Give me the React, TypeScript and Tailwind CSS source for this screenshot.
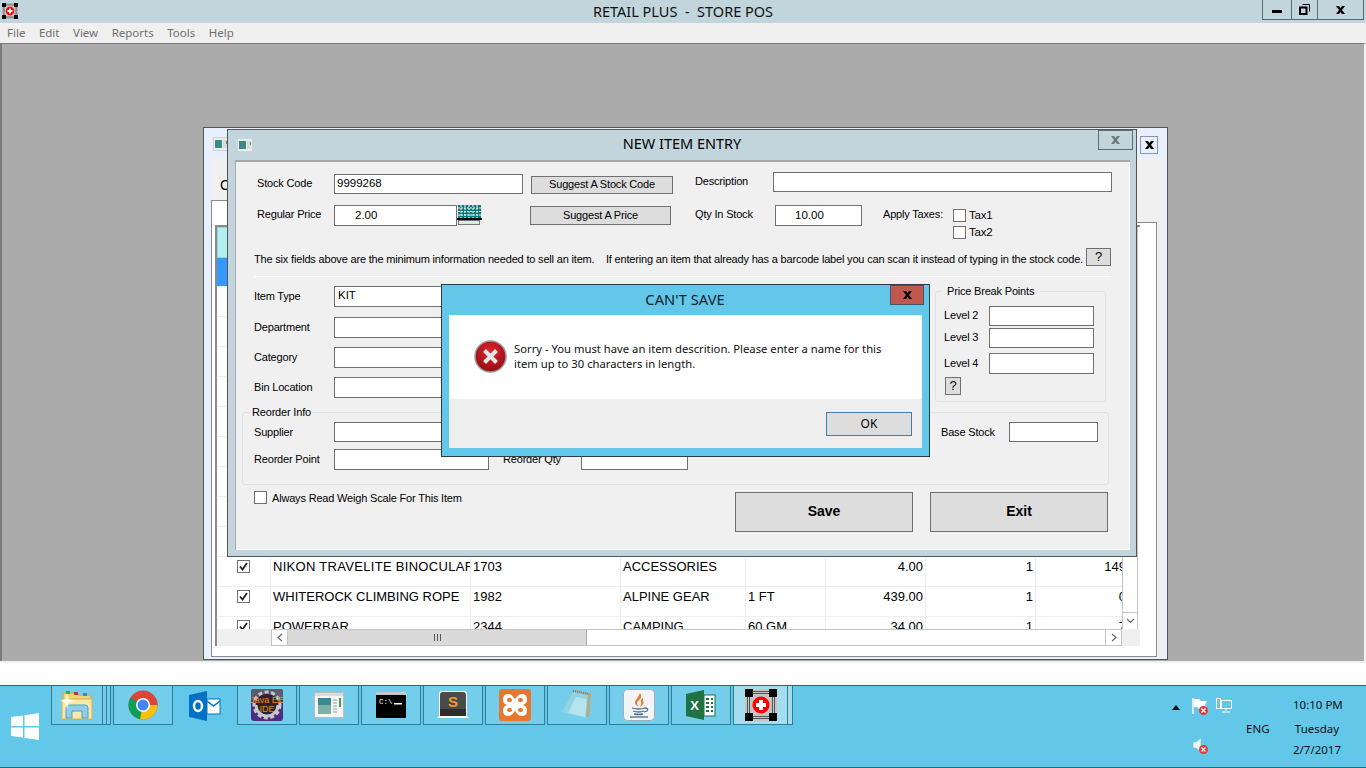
import React from "react";

const ui = "font-['Liberation_Sans',Arial,sans-serif]";
const segoe = "font-['Noto_Sans','Open_Sans',sans-serif]";

function AppGlyph({ size = 16 }: { size?: number }) {
  return (
    <svg width={size} height={size} viewBox="0 0 32 32">
      <rect x="0" y="0" width="32" height="32" fill="#c4c4c4" />
      <path d="M0 0h8v8H0zM24 0h8v8h-8zM0 24h8v8H0zM24 24h8v8h-8z" fill="#000" />
      <g stroke="#555" strokeWidth="1" fill="none">
        <path d="M8 2.5h16M8 4.5h16M8 27.5h16M8 29.5h16M2.5 8v16M4.5 8v16M27.5 8v16M29.5 8v16" />
      </g>
      <circle cx="16" cy="16" r="8.5" fill="#f00" />
      <path d="M14 11h4v3h3v4h-3v3h-4v-3h-3v-4h3z" fill="#fff" />
    </svg>
  );
}

function FormIcon() {
  return (
    <svg width="16" height="14" viewBox="0 0 16 14">
      <rect width="16" height="14" fill="#e8ecec" stroke="#b5bcbc" />
      <rect x="2" y="3" width="7" height="8" fill="#3d8a84" />
      <rect x="10" y="3" width="4" height="8" fill="#d5dcdc" />
      <rect x="13" y="4" width="1" height="3" fill="#5da24e" />
    </svg>
  );
}

function CloseX({ className = "" }: { className?: string }) {
  return (
    <svg width="9" height="8" viewBox="0 0 9 8" className={className}>
      <path d="M0 0h3l1.5 2L6 0h3L6 4l3 4H6L4.5 6 3 8H0l3-4z" fill="currentColor" />
    </svg>
  );
}

function CheckBox({ checked = false }: { checked?: boolean }) {
  return (
    <span className="flex h-[13px] w-[13px] shrink-0 items-center justify-center border border-[#707070] bg-white">
      {checked && (
        <svg width="9" height="9" viewBox="0 0 9 9">
          <path d="M1 4.5 3.5 7.5 8 1" stroke="#222" strokeWidth="1.8" fill="none" />
        </svg>
      )}
    </span>
  );
}

function Input({ width, height = 20, value = "", pad = 3 }: { width: number; height?: number; value?: string; pad?: number }) {
  return (
    <div
      className="flex shrink-0 items-center border border-[#707070] bg-white text-[11.5px] tracking-normal text-black"
      style={{ width, height, paddingLeft: pad }}
    >
      {value}
    </div>
  );
}

function GrayButton({ children, className = "" }: { children: React.ReactNode; className?: string }) {
  return (
    <div className={`flex shrink-0 items-center justify-center border border-[#707070] bg-[#dddddd] text-black ${className}`}>
      {children}
    </div>
  );
}

function Label({ children, width, className = "" }: { children: React.ReactNode; width: number; className?: string }) {
  return (
    <span className={`shrink-0 whitespace-nowrap text-black ${className}`} style={{ width }}>
      {children}
    </span>
  );
}

const columnWidths = [54, 200, 150, 125, 80, 100, 110, 90];

const rows = [
  { name: "", code: "", cat: "", size: "", price: "", qty: "", extra: "", check: false, selected: true, spacing: 0 },
  ...Array.from({ length: 9 }, () => ({ name: "", code: "", cat: "", size: "", price: "", qty: "", extra: "", check: false, selected: false, spacing: 0 })),
  { name: "NIKON TRAVELITE BINOCULARS", code: "1703", cat: "ACCESSORIES", size: "", price: "4.00", qty: "1", extra: "149", check: true, selected: false, spacing: 0.3 },
  { name: "WHITEROCK CLIMBING ROPE", code: "1982", cat: "ALPINE GEAR", size: "1 FT", price: "439.00", qty: "1", extra: "0", check: true, selected: false, spacing: 0 },
  { name: "POWERBAR", code: "2344", cat: "CAMPING", size: "60 GM", price: "34.00", qty: "1", extra: "7", check: true, selected: false, spacing: 0 },
];

function ItemGrid() {
  return (
    <div className="ml-[3px] mt-[24px] flex h-[421px] w-[925px] flex-col border-l-2 border-t-2 border-[#8a8a8a]">
      <div className="flex h-[402px]">
        <div className="w-[905px] overflow-hidden">
          <div className="flex h-[31px]">
            <div className="h-full w-[54px] border border-[#8fd8d8] bg-[#b4efef] pl-[9px] pt-[6px] text-[14px] leading-none text-[#5a1030]">I</div>
          </div>
          {rows.map((row, i) => (
            <div
              key={i}
              className={`flex shrink-0 border-b border-[#eeeeee] text-[13px] text-black ${ui} ${row.selected ? "h-[29px] bg-[#3399ff]" : "h-[30px] bg-white"}`}
            >
              <div className="flex shrink-0 justify-center border-r border-[#eeeeee] pt-[3px]" style={{ width: columnWidths[0] }}>
                {row.check && <CheckBox checked />}
              </div>
              {[row.name, row.code, row.cat, row.size].map((text, j) => (
                <div
                  key={j}
                  className="shrink-0 overflow-hidden whitespace-nowrap border-r border-[#eeeeee] pl-[2px]"
                  style={{ width: columnWidths[j + 1], letterSpacing: j === 0 ? row.spacing : 0 }}
                >
                  {text}
                </div>
              ))}
              {[row.price, row.qty, row.extra].map((text, j) => (
                <div
                  key={j}
                  className={`shrink-0 overflow-hidden whitespace-nowrap text-right ${j === 2 ? "" : "border-r border-[#eeeeee] pr-[2px]"}`}
                  style={{ width: columnWidths[j + 5] }}
                >
                  {text}
                </div>
              ))}
            </div>
          ))}
        </div>
        <div className="flex w-[16px] flex-col justify-end border-x border-t border-[#c4c4c4] bg-white">
          <div className="flex h-[17px] items-center justify-center border-t border-[#c4c4c4]">
            <svg width="9" height="6" viewBox="0 0 9 6"><path d="M1 1l3.5 3.5L8 1" stroke="#666" strokeWidth="1.2" fill="none" /></svg>
          </div>
        </div>
      </div>
      <div className="flex h-[17px] bg-[#f0f0f0]">
        <div className="w-[54px]" />
        <div className="flex w-[851px] border border-[#c4c4c4] bg-white">
          <div className="flex w-[16px] items-center justify-center border-r border-[#c4c4c4]">
            <svg width="6" height="9" viewBox="0 0 6 9"><path d="M5 1L1 4.5 5 8" stroke="#666" strokeWidth="1.2" fill="none" /></svg>
          </div>
          <div className="flex w-[299px] items-center justify-center border-r border-[#a8a8a8] bg-[#dadada]">
            <svg width="7" height="7" viewBox="0 0 7 7"><path d="M.5 0v7M3.5 0v7M6.5 0v7" stroke="#555" /></svg>
          </div>
          <div className="flex-1" />
          <div className="flex w-[16px] items-center justify-center border-l border-[#c4c4c4]">
            <svg width="6" height="9" viewBox="0 0 6 9"><path d="M1 1l4 3.5L1 8" stroke="#666" strokeWidth="1.2" fill="none" /></svg>
          </div>
        </div>
      </div>
    </div>
  );
}

function BackWindow() {
  return (
    <div className="absolute left-[201px] top-[83px] flex h-[533px] w-[965px] flex-col border border-[#555] bg-[#e8efff]">
      <div className="flex h-[29px] items-start justify-between pl-[9px] pt-[9px]">
        <FormIcon />
        <div className="mr-[9px] mt-[-1px] flex h-[18px] w-[18px] items-center justify-center border border-[#8a94b0] text-black">
          <CloseX />
        </div>
      </div>
      <div className="ml-[7px] mr-[3px] flex h-[500px] flex-col bg-[#f0f0f0]">
        <div className={`h-[43px] pl-[9px] pt-[21px] text-[14px] leading-none text-black ${ui}`}>C</div>
        <div className="relative mr-[7px] h-[457px] border border-[#8a8a8a] bg-white">
          <ItemGrid />
          {/* the tab strip beside the selected tab */}
          <div className="absolute right-[-1px] top-[-1px] h-[23px] w-[300px] border-b border-[#8a8a8a] bg-[#f0f0f0]" />
        </div>
      </div>
    </div>
  );
}

function NewItemWindow() {
  return (
    <div className={`absolute left-[225px] top-[85px] flex h-[428px] w-[910px] flex-col border border-[#555] bg-[#c2d5dc] text-[11px] tracking-[-0.18px] ${ui}`}>
      <div className="relative flex h-[30px] shrink-0 items-center justify-center pb-[2px]">
        <span className="absolute left-[9px] top-[8px]"><FormIcon /></span>
        <span className={`text-[14.5px] tracking-normal text-black ${segoe}`}>NEW ITEM ENTRY</span>
        <div className="absolute right-[3px] top-0 flex h-[20px] w-[35px] items-center justify-center border border-[#5f6d72] text-[#6c7a7c]">
          <CloseX />
        </div>
      </div>
      <div className="ml-[7px] mr-[6px] h-[390px] border-t-2 border-[#a7a7a7] bg-[#f0f0f0] shadow-[inset_1px_0_0_#a7a7a7,inset_-1px_-1px_0_#ffffff]">
        <div className="flex items-center pl-[22px] pt-[12px]">
          <Label width={77} className="mt-[-2px]">Stock Code</Label>
          <Input width={189} value="9999268" pad={2} />
          <GrayButton className="ml-[8px] mt-[1px] h-[18px] w-[142px]">Suggest A Stock Code</GrayButton>
          <Label width={78} className="ml-[22px] mt-[-5px]">Description</Label>
          <div className="mt-[-4px]"><Input width={339} /></div>
        </div>
        <div className="flex items-start pl-[22px] pt-[11px]">
          <Label width={77} className="mt-[1px]">Regular Price</Label>
          <Input width={123} height={21} value="2.00" pad={20} />
          <svg width="25" height="20" viewBox="0 0 25 20" className="shrink-0">
            <rect x="1" y="0" width="23" height="15" fill="#0a7a7a" />
            <path d="M1 3h23M1 6.5h23M1 10h23M4 0v15M8 0v15M12 0v15M16 0v15M20 0v15" stroke="#fff" strokeDasharray="2 1" />
            <rect x="0" y="13" width="25" height="2" fill="#000" />
            <rect x="1.5" y="15.5" width="21" height="4" fill="#e4e4e4" stroke="#777" />
          </svg>
          <GrayButton className="ml-[48px] mt-[1px] h-[19px] w-[141px]">Suggest A Price</GrayButton>
          <Label width={80} className="ml-[24px] mt-[1px]">Qty In Stock</Label>
          <Input width={87} height={21} value="10.00" pad={19} />
          <Label width={70} className="ml-[21px] mt-[1px]">Apply Taxes:</Label>
          <div className="mt-[4px] flex flex-col gap-[4px] text-[11.5px] text-black">
            <div className="flex h-[13px] items-center gap-[3px]"><CheckBox /><span>Tax1</span></div>
            <div className="flex h-[13px] items-center gap-[3px]"><CheckBox /><span>Tax2</span></div>
          </div>
        </div>
        <div className="mt-[7px] flex items-center pl-[19px]">
          <span className="mt-[5px] w-[832px] shrink-0 whitespace-pre text-black">The six fields above are the minimum information needed to sell an item.    If entering an item that already has a barcode label you can scan it instead of typing in the stock code.</span>
          <GrayButton className="h-[18px] w-[25px] text-[13px]">?</GrayButton>
        </div>
        <div className="ml-[19px] mt-[8px] h-px w-[857px] bg-white" />
        <div className="flex h-[125px] items-start">
          <div className="w-[700px] pl-[19px] pt-[9px]">
            {[
              { label: "Item Type", value: "KIT", top: 0 },
              { label: "Department", value: "", top: 10 },
              { label: "Category", value: "", top: 9 },
              { label: "Bin Location", value: "", top: 9 },
            ].map((field) => (
              <div key={field.label} className="flex items-center" style={{ marginTop: field.top }}>
                <Label width={80}>{field.label}</Label>
                <Input width={155} height={21} value={field.value} />
              </div>
            ))}
          </div>
          <fieldset className="mt-[9px] h-[116px] w-[171px] rounded-[3px] border border-[#dce2e6] pl-[8px]">
            <legend className="ml-[-2px] px-[5px] leading-none text-black">Price Break Points</legend>
            <div className="mt-[9px] flex items-center"><Label width={45}>Level 2</Label><Input width={105} /></div>
            <div className="mt-[2px] flex items-center"><Label width={45}>Level 3</Label><Input width={105} /></div>
            <div className="mt-[5px] flex items-center"><Label width={45}>Level 4</Label><Input width={105} height={21} /></div>
            <GrayButton className="ml-[1px] mt-[3px] h-[18px] w-[16px] text-[13px]">?</GrayButton>
          </fieldset>
        </div>
        <fieldset className="ml-[7px] mt-[5px] h-[78px] w-[867px] rounded-[3px] border border-[#dce2e6] pl-[11px]">
          <legend className="ml-[-3px] px-[1px] leading-none text-black">Reorder Info</legend>
          <div className="mt-[4px] flex items-center">
            <Label width={80} className="mt-[2px]">Supplier</Label>
            <Input width={155} />
            <Label width={68} className="ml-[452px] mt-[2px]">Base Stock</Label>
            <Input width={89} />
          </div>
          <div className="mt-[7px] flex items-center">
            <Label width={80}>Reorder Point</Label>
            <Input width={155} height={21} />
            <Label width={78} className="ml-[14px]">Reorder Qty</Label>
            <Input width={107} height={21} />
          </div>
        </fieldset>
        <div className="flex items-start">
          <div className="ml-[19px] mt-[5px] flex w-[481px] items-center gap-[5px]">
            <CheckBox />
            <span className="text-black">Always Read Weigh Scale For This Item</span>
          </div>
          <GrayButton className="mt-[7px] h-[40px] w-[178px] text-[14px] font-bold tracking-normal">Save</GrayButton>
          <GrayButton className="ml-[17px] mt-[7px] h-[40px] w-[178px] text-[14px] font-bold tracking-normal">Exit</GrayButton>
        </div>
      </div>
    </div>
  );
}

function CantSaveDialog() {
  return (
    <div className={`absolute left-[439px] top-[240px] flex h-[173px] w-[489px] flex-col border border-[#2b3e46] bg-[#63c7e9] ${segoe}`}>
      <div className="relative flex h-[30px] shrink-0 items-center justify-center pb-[2px]">
        <span className="pr-[1px] text-[14.7px] text-[#10242c]">CAN'T SAVE</span>
        <div className="absolute right-[5px] top-0 flex h-[20px] w-[34px] items-center justify-center border border-[#3f5a62] bg-[#c0584f] text-black">
          <CloseX />
        </div>
      </div>
      <div className="mx-[7px] flex h-[84px] items-start bg-white pl-[25px] pt-[25px]">
        <svg width="33" height="33" viewBox="0 0 33 33" className="shrink-0">
          <defs>
            <radialGradient id="err" cx="50%" cy="35%" r="70%">
              <stop offset="0%" stopColor="#e0262c" />
              <stop offset="100%" stopColor="#8e0a12" />
            </radialGradient>
          </defs>
          <circle cx="16.5" cy="16.5" r="15.5" fill="url(#err)" stroke="#9a9a9a" strokeWidth="1.5" />
          <path d="M10.5 10.5 22.5 22.5M22.5 10.5 10.5 22.5" stroke="#e6e6e6" strokeWidth="4" />
        </svg>
        <p className="ml-[7px] mt-[1px] w-[385px] text-[11.25px] leading-[15px] text-[#101010]">
          Sorry - You must have an item descrition. Please enter a name for this item up to 30 characters in length.
        </p>
      </div>
      <div className="mx-[7px] flex h-[49px] items-start justify-end bg-[#eeeeee] pr-[10px] pt-[13px]">
        <div className="flex h-[24px] w-[86px] items-center justify-center border border-[#3c7fb1] bg-[#dddddd] text-[12px] text-black">OK</div>
      </div>
    </div>
  );
}

function ExplorerIcon() {
  return (
    <svg width="34" height="32" viewBox="0 0 34 32">
      <path d="M3 4h12l2 2h14v24H3z" fill="#f0d476" stroke="#c9a949" />
      <rect x="6" y="2" width="4" height="3" fill="#22b14c" />
      <rect x="14" y="3" width="4" height="3" fill="#b83b2a" />
      <rect x="23" y="4" width="4" height="3" fill="#2a8ad4" />
      <path d="M2 10h30v20H2z" fill="#fbe9a6" stroke="#d3b357" />
      <path d="M6 29V19q0-3 3-3h16q3 0 3 3v10h-6v-7H12v7z" fill="#8fd0e8" stroke="#4f9fc4" />
      <path d="M7 4l2 6 5 2-5 2-2 6-2-6-5-2 5-2z" fill="#fff" opacity=".7" />
    </svg>
  );
}

function ChromeIcon() {
  return (
    <svg width="30" height="30" viewBox="0 0 30 30">
      <circle cx="15" cy="15" r="14.5" fill="#db4437" />
      <path d="M15 15 2.5 7.7A14.5 14.5 0 0 0 12 29.2z" fill="#0f9d58" />
      <path d="M15 15h14.5A14.5 14.5 0 0 1 12 29.2z" fill="#f4c20d" />
      <path d="M15 8.5h13A14.5 14.5 0 0 1 29.5 15H15z" fill="#db4437" />
      <circle cx="15" cy="15" r="7" fill="#fff" />
      <circle cx="15" cy="15" r="5.5" fill="#4285f4" />
    </svg>
  );
}

function OutlookIcon() {
  return (
    <svg width="32" height="30" viewBox="0 0 32 30">
      <path d="M0 4 18 0v30L0 26z" fill="#0072c6" />
      <ellipse cx="9" cy="15" rx="4" ry="5" fill="none" stroke="#fff" strokeWidth="2.5" />
      <rect x="18" y="8" width="13" height="15" fill="#fff" stroke="#0072c6" />
      <path d="M18 10l6.5 5L31 10" fill="none" stroke="#0072c6" strokeWidth="1.5" />
    </svg>
  );
}

function EclipseIcon() {
  return (
    <svg width="32" height="32" viewBox="0 0 32 32">
      <rect width="32" height="32" rx="3" fill="#4b2d83" />
      <rect width="32" height="12" rx="3" fill="#5c5c6e" />
      <circle cx="16" cy="16" r="11" fill="#2a2230" />
      <circle cx="16" cy="16" r="13" fill="none" stroke="#c8c8c8" strokeWidth="3" strokeDasharray="4 2.5" />
      <path d="M5 16a11 11 0 0 0 22 0" fill="none" stroke="#c8c8c8" strokeWidth="3" />
      <text x="16" y="13.5" textAnchor="middle" fontSize="9" fill="#f08a1d" fontFamily="Liberation Sans">Java EE</text>
      <text x="16" y="23" textAnchor="middle" fontSize="9" fill="#f08a1d" fontFamily="Liberation Sans">IDE</text>
    </svg>
  );
}

function WindowIcon() {
  return (
    <svg width="30" height="26" viewBox="0 0 30 26">
      <rect x=".5" y=".5" width="29" height="25" fill="#f4f6f6" stroke="#bcbcbc" />
      <rect x="1" y="1" width="28" height="3" fill="#d9dddd" />
      <rect x="4" y="6" width="13" height="16" fill="#7ab3a5" />
      <rect x="4" y="6" width="13" height="7" fill="#3a8a96" />
      <path d="M19 8h4M19 11h4M19 14h4M19 17h4M19 20h4" stroke="#999" />
      <rect x="25" y="6" width="2" height="9" fill="#3f9c56" />
    </svg>
  );
}

function CmdIcon() {
  return (
    <svg width="30" height="26" viewBox="0 0 30 26">
      <rect width="30" height="26" rx="1" fill="#000" />
      <rect width="30" height="3" fill="#c8c8c8" />
      <text x="3" y="12" fontSize="7.5" fill="#fff" fontFamily="Liberation Mono">C:\</text>
      <rect x="18" y="11" width="8" height="1.5" fill="#fff" />
    </svg>
  );
}

function SublimeIcon() {
  return (
    <svg width="32" height="28" viewBox="0 0 32 28">
      <path d="M2 3Q2 0 5 0h22q3 0 3 3v22l2 2H0l2-2z" fill="#fff" />
      <path d="M3 4q0-3 3-3h20q3 0 3 3v21H3z" fill="#4a4a4a" />
      <rect x="3" y="18" width="26" height="7" fill="#2e2e2e" />
      <text x="16" y="16" textAnchor="middle" fontSize="15" fontWeight="bold" fill="#f29b2c" fontFamily="Liberation Sans">S</text>
    </svg>
  );
}

function XamppIcon() {
  return (
    <svg width="32" height="32" viewBox="0 0 32 32">
      <rect width="32" height="32" rx="3" fill="#e8762c" />
      <path d="M9 5c4 0 5 3 7 5 2-2 3-5 7-5 4 0 5 3 5 6 0 3-2 4-4 5 2 1 4 2 4 5 0 3-1 6-5 6-4 0-5-3-7-5-2 2-3 5-7 5-4 0-5-3-5-6 0-3 2-4 4-5-2-1-4-2-4-5 0-3 1-6 5-6z" fill="#fff" />
      <rect x="8" y="9" width="5" height="4" rx="2" fill="#e8762c" />
      <rect x="19" y="9" width="5" height="4" rx="2" fill="#e8762c" />
      <rect x="8" y="19" width="5" height="4" rx="2" fill="#e8762c" />
      <rect x="19" y="19" width="5" height="4" rx="2" fill="#e8762c" />
    </svg>
  );
}

function NotepadIcon() {
  return (
    <svg width="32" height="32" viewBox="0 0 32 32">
      <path d="M12 1 30 4 28 28 2 22z" fill="#b8a87a" />
      <path d="M12 2 27 5 25 29 1 23z" fill="#8fd3e4" />
      <path d="M15 8 26 10 24 28 7 24z" fill="#bfe8f0" opacity=".8" />
      <path d="M12 2l15 3" stroke="#777" strokeDasharray="1 1" strokeWidth="2" />
    </svg>
  );
}

function JavaIcon() {
  return (
    <svg width="32" height="32" viewBox="0 0 32 32">
      <rect x=".5" y=".5" width="31" height="31" rx="4" fill="#f2f4f6" stroke="#9fb0bd" />
      <path d="M17 4q3 4-1 7t0 7q-6-3-3-7t4-7zM20 9q-3 2-2 4t-1 5q5-3 3-6z" fill="#e8792b" />
      <path d="M9 19q7 2 13 0M10 22q6 2 11 0M11 25q5 1 9 0M22 19q4 0 2 3l-3 1" stroke="#4a6d8c" strokeWidth="1.3" fill="none" />
      <path d="M7 28h18" stroke="#4a6d8c" strokeWidth="1.3" />
    </svg>
  );
}

function ExcelIcon() {
  return (
    <svg width="30" height="30" viewBox="0 0 30 30">
      <path d="M0 4 18 0v30L0 26z" fill="#1f7244" />
      <rect x="18" y="5" width="11" height="21" fill="#fff" stroke="#1f7244" />
      <path d="M20 9h3M25 9h2M20 13h3M25 13h2M20 17h3M25 17h2M20 21h3M25 21h2" stroke="#1f7244" strokeWidth="2" />
      <text x="8.5" y="20" textAnchor="middle" fontSize="13" fontWeight="bold" fill="#fff" fontFamily="Liberation Sans">X</text>
    </svg>
  );
}

const taskItems = [
  { icon: <ChromeIcon />, plain: false },
  { icon: <OutlookIcon />, plain: true },
  { icon: <EclipseIcon />, plain: false },
  { icon: <WindowIcon />, plain: false },
  { icon: <CmdIcon />, plain: false },
  { icon: <SublimeIcon />, plain: false },
  { icon: <XamppIcon />, plain: false },
  { icon: <NotepadIcon />, plain: false },
  { icon: <JavaIcon />, plain: false },
  { icon: <ExcelIcon />, plain: false },
];

function ErrorBadge() {
  return (
    <svg width="9" height="9" viewBox="0 0 9 9" className="absolute bottom-0 right-0">
      <circle cx="4.5" cy="4.5" r="4.5" fill="#e4393c" />
      <path d="M2.5 2.5l4 4M6.5 2.5l-4 4" stroke="#fff" strokeWidth="1.2" />
    </svg>
  );
}

function Taskbar() {
  return (
    <div className={`flex h-[83px] shrink-0 border-y border-[#555] bg-[#63c7e9] ${segoe}`}>
      <div className="w-[51px] pl-[11px] pt-[27px]">
        <svg width="28" height="27" viewBox="0 0 28 27">
          <path d="M0 4 12 2.5V13H0zM13.5 2.3 28 0v13H13.5zM0 14.5h12V24.5L0 23zM13.5 14.5H28V27L13.5 25z" fill="#fff" />
        </svg>
      </div>
      <div className="flex h-[39px] w-[52px] items-center justify-center border-b border-l border-r border-[#2f7f94] bg-[#74cdeb]"><ExplorerIcon /></div>
      <div className="h-[39px] w-[4px] border-b border-r border-[#2f7f94] bg-[#74cdeb]" />
      <div className="mr-[2px] h-[39px] w-[4px] border-b border-r border-[#2f7f94] bg-[#74cdeb]" />
      {taskItems.map((item, i) => (
        <div
          key={i}
          className={`mr-[2px] flex h-[39px] w-[60px] items-center justify-center ${item.plain ? "" : "border-x border-b border-[#2f7f94] bg-[#74cdeb]"}`}
        >
          {item.icon}
        </div>
      ))}
      <div className="flex h-[39px] w-[55px] items-center justify-center border-x border-b border-[#2f7f94] bg-[#a5dcf0]">
        <AppGlyph size={32} />
      </div>
      <div className="h-[39px] w-[5px] border-b border-r border-[#2f7f94] bg-[#a5dcf0]" />

      <div className="ml-auto grid h-full w-[194px] grid-cols-[20px_24px_30px_47px_48px] content-start pt-[10px] text-[11.5px] text-[#101010]">
        <div className="row-span-3 pt-[9px]">
          <svg width="8" height="5" viewBox="0 0 8 5"><path d="M0 5 4 0l4 5z" fill="#111" /></svg>
        </div>
        <div className="relative mt-[2px] h-[17px] w-[16px]">
          <svg width="16" height="16" viewBox="0 0 16 16">
            <path d="M1 0v16" stroke="#fff" strokeWidth="1.5" />
            <path d="M2 1h5l2 2h6l-2 4 2 4H7l-2-2H2z" fill="#fff" />
          </svg>
          <ErrorBadge />
        </div>
        <div className="mt-[2px]">
          <svg width="16" height="16" viewBox="0 0 16 16" fill="none" stroke="#fff">
            <rect x=".5" y=".5" width="4" height="10" />
            <rect x="5.5" y="2.5" width="10" height="8" />
            <path d="M10 11v2M6 14h8" />
          </svg>
        </div>
        <div />
        <div className="h-[23px] whitespace-nowrap text-center">10:10 PM</div>
        <div />
        <div />
        <div className="h-[22px] pt-[1px]">ENG</div>
        <div className="h-[22px] pt-[1px] text-center">Tuesday</div>
        <div className="relative mt-[-4px] h-[17px] w-[16px]">
          <svg width="16" height="16" viewBox="0 0 16 16"><path d="M1 5h3l5-4v14l-5-4H1z" fill="#e8f4f8" stroke="#8aa" strokeWidth=".5" /></svg>
          <ErrorBadge />
        </div>
        <div />
        <div />
        <div className="whitespace-nowrap text-center">2/7/2017</div>
      </div>
    </div>
  );
}

export default function App() {
  return (
    <div className="flex h-[768px] w-[1366px] flex-col overflow-hidden bg-[#f0f0f0]">
      <div className="relative flex h-[23px] shrink-0 items-center justify-center bg-[#c2d5dc]">
        <span className="absolute left-[2px] top-[3px]"><AppGlyph /></span>
        <span className={`mt-[1px] whitespace-pre text-[14.5px] text-[#111] ${segoe}`}>RETAIL PLUS  -  STORE POS</span>
        <div className="absolute right-[2px] top-0 flex h-[20px] border-x border-b border-[#5a6a70] text-black">
          <div className="flex w-[28px] items-end justify-center pb-[6px]"><span className="h-[3px] w-[10px] bg-black" /></div>
          <div className="flex w-[26px] items-center justify-center border-l border-[#5a6a70]">
            <svg width="11" height="11" viewBox="0 0 11 11" fill="none" stroke="#000"><rect x="1" y="3.5" width="6.5" height="6.5" strokeWidth="2" /><path d="M3.5 .5h7v7" /></svg>
          </div>
          <div className="flex w-[46px] items-center justify-center border-l border-[#5a6a70]"><CloseX /></div>
        </div>
      </div>
      <div className={`flex h-[20px] shrink-0 items-center gap-[13.5px] pl-[7px] text-[11.5px] text-[#6e6e6e] ${segoe}`}>
        <span>File</span><span>Edit</span><span>View</span><span>Reports</span><span>Tools</span><span>Help</span>
      </div>
      <div className="relative h-[618px] shrink-0 border-l-2 border-r-2 border-t border-[#7a7a7a] border-r-[#f0f0f0] bg-[#ababab]">
        <BackWindow />
        <NewItemWindow />
        <CantSaveDialog />
      </div>
      <div className="h-[24px] shrink-0 border-t-2 border-[#f0f0f0] bg-white" />
      <Taskbar />
    </div>
  );
}
